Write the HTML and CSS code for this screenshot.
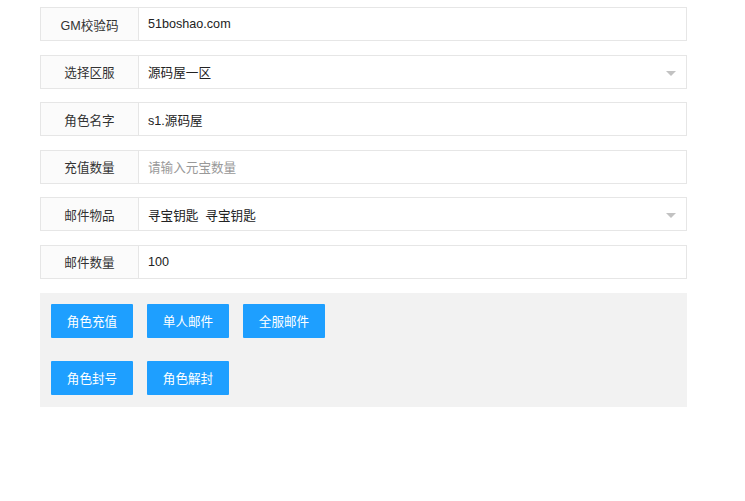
FILE: index.html
```html
<!DOCTYPE html>
<html lang="zh-CN">
<head>
  <meta charset="UTF-8">
  <title>GM后台</title>
  <link rel="stylesheet" href="styles.css">
</head>
<body>
  <div class="gm-form">
    <div class="form-item">
      <label class="form-label">GM校验码</label>
      <div class="form-input">51boshao.com</div>
    </div>
    <div class="form-item">
      <label class="form-label">选择区服</label>
      <div class="form-input form-select">源码屋一区<i class="select-arrow"></i></div>
    </div>
    <div class="form-item">
      <label class="form-label">角色名字</label>
      <div class="form-input">s1.源码屋</div>
    </div>
    <div class="form-item">
      <label class="form-label">充值数量</label>
      <div class="form-input placeholder">请输入元宝数量</div>
    </div>
    <div class="form-item">
      <label class="form-label">邮件物品</label>
      <div class="form-input form-select">寻宝钥匙&nbsp; 寻宝钥匙<i class="select-arrow"></i></div>
    </div>
    <div class="form-item">
      <label class="form-label">邮件数量</label>
      <div class="form-input">100</div>
    </div>

    <div class="btn-panel">
      <div class="btn-row">
        <button class="btn">角色充值</button>
        <button class="btn">单人邮件</button>
        <button class="btn">全服邮件</button>
      </div>
      <div class="btn-row">
        <button class="btn">角色封号</button>
        <button class="btn">角色解封</button>
      </div>
    </div>
  </div>
</body>
</html>
```

FILE: styles.css
```css
/* General */
body {
  margin: 0;
  background: #fff;
  font-family: 'Liberation Sans', 'Noto Sans CJK SC', sans-serif;
  font-size: 12.6px;
  color: #333;
}

.gm-form {
  width: 647px;
  padding: 7px 0 0 40px;
}

/* Form rows */
.form-item {
  display: flex;
  height: 34px;
  margin-bottom: 13.6px;
}

.form-label {
  box-sizing: border-box;
  width: 99px;
  flex: none;
  display: flex;
  align-items: center;
  justify-content: center;
  background: #fbfbfb;
  border: 1px solid #e6e6e6;
  color: #333;
}

.form-input {
  position: relative;
  box-sizing: border-box;
  flex: 1;
  display: flex;
  align-items: center;
  padding-left: 9px;
  border: 1px solid #e6e6e6;
  border-left: none;
  color: #222;
}

.form-input.placeholder {
  color: #999;
}

.select-arrow {
  position: absolute;
  right: 10px;
  top: 15px;
  width: 0;
  height: 0;
  border-width: 5.4px 5.4px 0;
  border-style: solid;
  border-color: #c2c2c2 transparent transparent;
}

/* Buttons */
.btn-panel {
  background: #f2f2f2;
  padding: 11px 11px 12px;
}

.btn-row {
  display: flex;
  gap: 14px;
}

.btn-row + .btn-row {
  margin-top: 23px;
}

.btn {
  width: 82px;
  height: 34px;
  border: none;
  border-radius: 1px;
  background: #1e9fff;
  color: #fff;
  font-family: 'Liberation Sans', 'Noto Sans CJK SC', sans-serif;
  font-size: 12.6px;
  padding: 0;
  cursor: pointer;
}
```
